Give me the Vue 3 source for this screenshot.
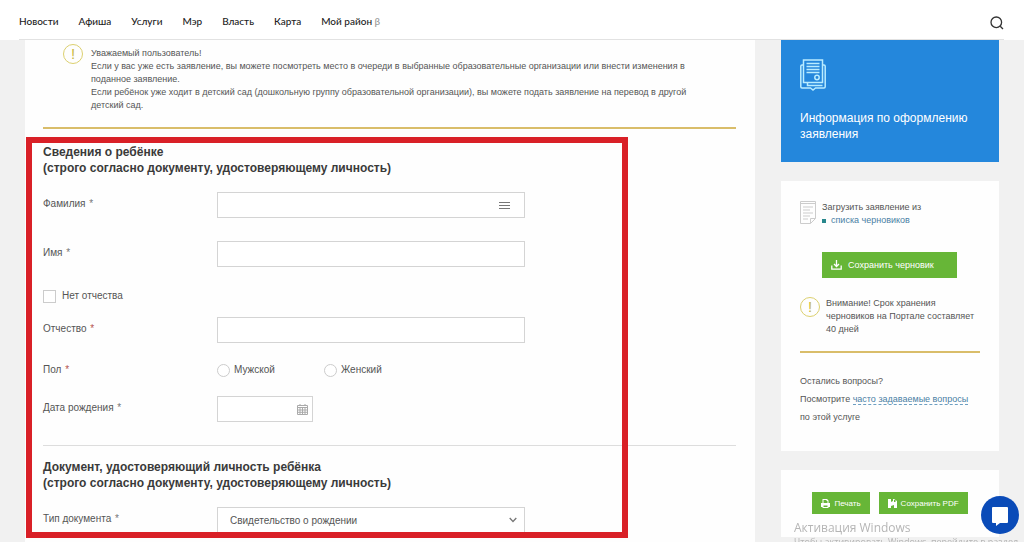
<script setup>
import { ref } from 'vue'

const nav = ['Новости', 'Афиша', 'Услуги', 'Мэр', 'Власть', 'Карта']
const surname = ref('')
const name = ref('')
const patronymic = ref('')
const noPatronymic = ref(false)
const gender = ref('')
const birth = ref('')
const docType = ref('birth')
</script>

<template>
  <div class="page">
    <header class="header">
      <nav class="nav">
        <a v-for="item in nav" :key="item" href="#">{{ item }}</a>
        <a href="#">Мой район <span class="beta">β</span></a>
      </nav>
      <button class="search" type="button" aria-label="Поиск">
        <svg viewBox="0 0 14 14" width="14" height="14"><circle cx="6.3" cy="6.3" r="5.3" /><path d="M10.2 10.2 13 13" /></svg>
      </button>
    </header>

    <div class="layout">
      <main class="panel">
        <section class="notice">
          <span class="alert">!</span>
          <p>
            Уважаемый пользователь!<br />
            Если у вас уже есть заявление, вы можете посмотреть место в очереди в выбранные образовательные организации или внести изменения в<br />
            поданное заявление.<br />
            Если ребёнок уже ходит в детский сад (дошкольную группу образовательной организации), вы можете подать заявление на перевод в другой<br />
            детский сад.
          </p>
        </section>

        <form class="form" @submit.prevent>
          <h2>Сведения о ребёнке<br />(строго согласно документу, удостоверяющему личность)</h2>
          <div class="row">
            <label for="surname">Фамилия <i>*</i></label>
            <div class="control wide">
              <input id="surname" v-model="surname" type="text" />
              <svg class="inside menu" viewBox="0 0 11 9" width="11" height="9"><path d="M0 1.500h11M0 4.500h11M0 7.500h11" /></svg>
            </div>
          </div>
          <div class="row">
            <label for="name">Имя <i>*</i></label>
            <div class="control wide"><input id="name" v-model="name" type="text" /></div>
          </div>
          <label class="check"><input v-model="noPatronymic" type="checkbox" />Нет отчества</label>
          <div class="row">
            <label for="patronymic">Отчество <i class="req">*</i></label>
            <div class="control wide"><input id="patronymic" v-model="patronymic" type="text" /></div>
          </div>
          <div class="row radios" role="radiogroup" aria-labelledby="gender">
            <span id="gender" class="caption">Пол <i class="req">*</i></span>
            <label class="radio"><input v-model="gender" type="radio" name="gender" value="m" />Мужской</label>
            <label class="radio"><input v-model="gender" type="radio" name="gender" value="f" />Женский</label>
          </div>
          <div class="row date">
            <label for="birth">Дата рождения <i>*</i></label>
            <div class="control short">
              <input id="birth" v-model="birth" type="text" />
              <svg class="inside calendar" viewBox="0 0 11 11" width="11" height="11">
                <path d="M.5 1.5h10v9H.5zM.5 3.5h10M.5 6h10M.5 8.3h10M3 3.5v7M5.5 3.5v7M8 3.5v7M3 0v2M8 0v2" />
              </svg>
            </div>
          </div>
          <hr />
          <h2>Документ, удостоверяющий личность ребёнка<br />(строго согласно документу, удостоверяющему личность)</h2>
          <div class="row">
            <label for="doc">Тип документа <i>*</i></label>
            <div class="control wide">
              <select id="doc" v-model="docType"><option value="birth">Свидетельство о рождении</option></select>
              <svg class="inside chevron" viewBox="0 0 8 6" width="8" height="6"><path d="M.7 1 4 4.5 7.3 1" /></svg>
            </div>
          </div>
        </form>
      </main>

      <aside class="side">
        <a class="info" href="#">
          <svg viewBox="0 0 26 32" width="26" height="32">
            <path d="M3.500 6H2A1.200 1.200 0 0 0 .8 7.200v20.600A1.200 1.200 0 0 0 2 29h8.500l2.500 2 2.500-2H24a1.200 1.200 0 0 0 1.200-1.200V7.200A1.200 1.200 0 0 0 24 6h-1.500" />
            <path d="M3.500 1h19v22.500h-19zM7.500 23.500v3h15" />
            <path d="M6.500 4.500h13M6.500 7.500h13M6.500 10.500h13M6.500 13.500h13" />
            <circle cx="17" cy="18.500" r="2.200" />
          </svg>
          <span>Информация по оформлению заявления</span>
        </a>

        <section class="card drafts">
          <div class="load">
            <svg viewBox="0 0 16 23" width="16" height="23">
              <path d="M.5.5h15v17l-5 5H.5zM15.500 17.500h-5v5M.5 2.500h15M3 6h10M3 9h7M3 12h10M3 15h7M3 18h5" />
            </svg>
            <div>Загрузить заявление из<ul><li><a href="#">списка черновиков</a></li></ul></div>
          </div>
          <button class="green save" type="button">
            <svg viewBox="0 0 11 10" width="11" height="10"><path d="M.8 5.500v3.700h9.400V5.500M5.500 0v6M3 4l2.500 2.500L8 4" /></svg>
            Сохранить черновик
          </button>
          <div class="warning">
            <span class="alert">!</span>
            <p>Внимание! Срок хранения черновиков на Портале составляет 40 дней</p>
          </div>
          <p class="faq">Остались вопросы?<br />Посмотрите <a href="#">часто задаваемые вопросы</a><br />по этой услуге</p>
        </section>

        <section class="card actions">
          <button class="green" type="button">
            <svg class="solid" viewBox="0 0 9 9" width="9" height="9"><path fill-rule="evenodd" d="M2 0h4l1.500 1.500V4H9v4H7.500v1h-6V8H0V4h1.500V0zM2.500 1v3h4V2H5.500V1zM2.500 6.500V8h4V6.500z" /></svg>
            Печать
          </button>
          <button class="green" type="button">
            <svg class="solid" viewBox="0 0 9 9" width="9" height="9"><path fill-rule="evenodd" d="M0 0h3v3l2-1V0h1l3 2v7H6V6L3 7v2H0zM6 1v2h1.500V1z" /></svg>
            Сохранить PDF
          </button>
        </section>
      </aside>
    </div>

    <div class="watermark"><strong>Активация Windows</strong><span>Чтобы активировать Windows, перейдите в раздел</span></div>
    <button class="chat" type="button" aria-label="Чат">
      <svg viewBox="0 0 16 19" width="16" height="19"><path d="M1 0h14a1 1 0 0 1 1 1v14a1 1 0 0 1-1 1H8l-4 3v-3H1a1 1 0 0 1-1-1V1a1 1 0 0 1 1-1z" /></svg>
    </button>
  </div>
</template>

<style>
body { margin: 0; background: #f1f1f1; }
</style>

<style scoped>
* { box-sizing: border-box; }
.page {
  height: 100vh;
  overflow: hidden;
  position: relative;
  font: 9px/13px "Liberation Sans", Arial, sans-serif;
  color: #555;
}
p, h2, ul { margin: 0; padding: 0; }
button { font: inherit; border: 0; padding: 0; cursor: pointer; }
svg { flex: none; fill: none; }
i { font-style: normal; color: #777; margin-left: 1px; }
i.req { color: #b5544f; }

.header {
  height: 40px;
  padding: 0 20px 0 19px;
  background: #fff;
  display: flex;
  justify-content: space-between;
}
.nav {
  flex: 1;
  display: flex;
  gap: 20px;
  padding-top: 14px;
  border-bottom: 1px solid #e2e2e2;
  font: 500 10px/14px Lato, sans-serif;
}
.nav a { color: #222; text-decoration: none; }
.beta { color: #999; }
.search {
  background: none;
  width: 15px;
  padding-top: 10px;
  border-bottom: 1px solid #e2e2e2;
  stroke: #333;
  stroke-width: 1.3;
}

.layout {
  display: grid;
  grid-template-columns: minmax(0, 1fr) 218px;
  gap: 26px;
  padding: 0 25px;
}
.panel { background: #fefefe; padding: 0 19px 24px 18px; }
.notice {
  display: flex;
  gap: 8px;
  padding: 4px 0 15px 20px;
  border-bottom: 2px solid #d9bd6a;
}
.notice p { padding-top: 3px; white-space: nowrap; }
.alert {
  flex: none;
  width: 20px;
  height: 20px;
  border: 1px solid #dcd06f;
  border-radius: 50%;
  color: #c8b83c;
  font-size: 15px;
  line-height: 18px;
  text-align: center;
}

.form { position: relative; padding-top: 15px; font-size: 10px; line-height: 16px; }
.form::after {
  content: "";
  position: absolute;
  top: 8px;
  bottom: -5px;
  left: -17px;
  right: 108px;
  border: 6px solid #d92027;
  pointer-events: none;
}
h2 { font-size: 12px; line-height: 16px; color: #3a3a3a; margin-bottom: 16px; }
.row { display: grid; grid-template-columns: 174px minmax(0, 1fr); margin-bottom: 23px; }
.row label { padding-top: 4px; }
.control { position: relative; height: 26px; }
.wide { max-width: 308px; }
.short { width: 96px; }
.control input, .control select {
  appearance: none;
  display: block;
  width: 100%;
  height: 100%;
  border: 1px solid #d4d4d4;
  border-radius: 0;
  background: #fff;
  padding: 0 12px;
  font: 10px "Liberation Sans", Arial, sans-serif;
  color: #555;
}
.inside { position: absolute; stroke: #777; pointer-events: none; }
.menu { right: 15px; top: 9px; }
.calendar { right: 5px; top: 8px; stroke: #aaa; }
.chevron { right: 8px; top: 10px; stroke-width: 1.300; }
.check { display: flex; align-items: center; gap: 6px; margin: -2px 0 13px; }
.check input, .radio input {
  appearance: none;
  width: 13px;
  height: 13px;
  margin: 0;
  border: 1px solid #ccc;
  background: #fff;
}
.radio input { border-radius: 50%; }
.row.radios { grid-template-columns: 174px 107px 1fr; margin: -4px 0 18px; }
.row .radio { display: flex; align-items: center; gap: 4px; padding: 0; }
hr { border: 0; border-top: 1px solid #ddd; margin: 0 0 13px; }
.form .row:last-child { margin-bottom: 0; }

.info {
  display: block;
  background: #2487dc;
  padding: 19px 19px 20px;
  color: #fff;
  font-size: 12px;
  line-height: 16px;
  text-decoration: none;
}
.info svg { display: block; stroke: #b9ecff; stroke-width: 1.500; margin-bottom: 19px; }
.info span { display: block; }
.card { background: #fefefe; margin-top: 19px; }
.drafts { padding: 20px 19px 25px; }
.load { display: flex; gap: 6px; }
.load svg { stroke: #ccc; }
.load ul { list-style: none; }
.load li { display: flex; align-items: center; gap: 5px; }
.load li::before { content: ""; width: 4px; height: 4px; background: #28878c; }
.load a, .faq a { color: #4a7fa5; text-decoration: none; }
.green {
  background: #67b637;
  color: #fff;
  display: flex;
  align-items: center;
  justify-content: center;
  gap: 4px;
  height: 22px;
  padding: 0 9px;
  white-space: nowrap;
}
.green svg { stroke: #fff; stroke-width: 1.300; }
.green svg.solid { stroke: none; fill: #fff; }
.save { height: 26px; width: 135px; margin: 25px 0 19px 22px; gap: 6px; justify-content: flex-start; }
.warning { display: flex; gap: 6px; padding-bottom: 15px; border-bottom: 2px solid #d9bd6a; }
.warning p { margin-right: -6px; }
.faq { line-height: 18px; padding-top: 19px; white-space: nowrap; }
.faq a { border-bottom: 1px dashed #6d9fc2; }
.actions { display: flex; justify-content: center; gap: 9px; padding: 22px 0 23px; font-size: 8px; }

.watermark {
  position: fixed;
  left: 794px;
  top: 520px;
  font: 9px/14px "Open Sans", sans-serif;
  color: #b5b5b5;
  white-space: nowrap;
  pointer-events: none;
}
.watermark strong, .watermark span { display: block; font-weight: 400; }
.watermark strong { font-size: 12px; line-height: 15px; }
.chat {
  position: fixed;
  right: 5px;
  bottom: 8px;
  width: 38px;
  height: 38px;
  border-radius: 50%;
  background: #0a4bb8;
  display: flex;
  align-items: center;
  justify-content: center;
}
.chat svg { fill: #fff; margin-top: 3px; }
</style>
